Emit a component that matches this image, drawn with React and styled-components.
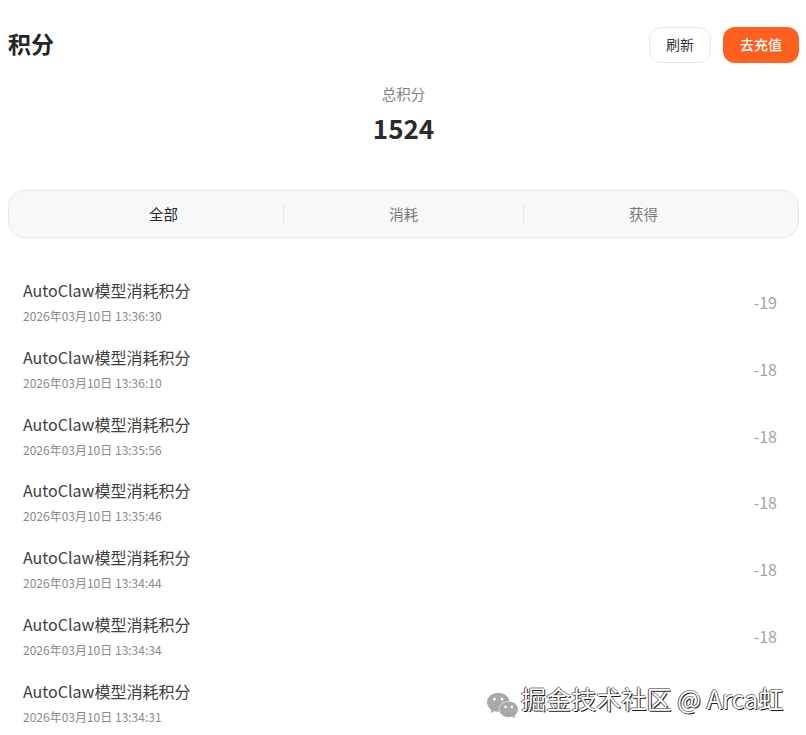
import styled, { createGlobalStyle } from "styled-components";
import { SiWechat } from "react-icons/si";

const records = [
  { time: "2026年03月10日 13:36:30", amount: -19 },
  { time: "2026年03月10日 13:36:10", amount: -18 },
  { time: "2026年03月10日 13:35:56", amount: -18 },
  { time: "2026年03月10日 13:35:46", amount: -18 },
  { time: "2026年03月10日 13:34:44", amount: -18 },
  { time: "2026年03月10日 13:34:34", amount: -18 },
  { time: "2026年03月10日 13:34:31", amount: -18 },
];

const tabs = ["全部", "消耗", "获得"];

export default function App() {
  return (
    <Page>
      <GlobalStyle />
      <Header>
        <Title>积分</Title>
        <Actions>
          <RefreshButton>刷新</RefreshButton>
          <RechargeButton>去充值</RechargeButton>
        </Actions>
      </Header>
      <Summary>
        <SummaryLabel>总积分</SummaryLabel>
        <SummaryValue>1524</SummaryValue>
      </Summary>
      <Tabs>
        {tabs.map((tab, i) => (
          <Tab key={tab} $active={i === 0}>
            {tab}
          </Tab>
        ))}
      </Tabs>
      <List>
        {records.map((record) => (
          <Row key={record.time}>
            <div>
              <RowTitle>AutoClaw模型消耗积分</RowTitle>
              <RowTime>{record.time}</RowTime>
            </div>
            <Amount>{record.amount}</Amount>
          </Row>
        ))}
      </List>
      <Watermark>
        <WechatMark size={31} color="#a9a9a9" />
        <WatermarkText>掘金技术社区 @ Arca虹</WatermarkText>
      </Watermark>
    </Page>
  );
}

const GlobalStyle = createGlobalStyle`
  html, body {
    margin: 0;
    height: 100%;
    overflow: hidden;
    background: #fff;
  }
  body {
    font-family: "Noto Sans CJK SC", "Noto Sans", sans-serif;
  }
`;

const Page = styled.div`
  position: relative;
  box-sizing: border-box;
  width: 806px;
  height: 735px;
  overflow: hidden;
  padding: 27px 7px 0 8px;
`;

const Header = styled.div`
  display: flex;
  align-items: center;
  justify-content: space-between;
  height: 36px;
`;

const Title = styled.h1`
  margin: 0;
  padding-bottom: 4px;
  font-size: 23px;
  font-weight: 700;
  line-height: 32px;
  color: #262626;
`;

const Actions = styled.div`
  display: flex;
  gap: 12px;
`;

const RefreshButton = styled.button`
  box-sizing: border-box;
  width: 62px;
  height: 36px;
  padding: 0 0 2px;
  border: 1px solid #e8e8e8;
  border-radius: 12px;
  background: #fff;
  font: 400 14px "Noto Sans CJK SC", sans-serif;
  color: #333;
`;

const RechargeButton = styled.button`
  box-sizing: border-box;
  width: 76px;
  height: 36px;
  padding: 0 0 2px;
  border: 0;
  border-radius: 12px;
  background: #ff5f1f;
  font: 500 14px "Noto Sans CJK SC", sans-serif;
  color: #fff;
`;

const Summary = styled.div`
  display: flex;
  flex-direction: column;
  align-items: center;
  padding-top: 21px;
`;

const SummaryLabel = styled.div`
  font-size: 14.5px;
  line-height: 20px;
  color: #808080;
`;

const SummaryValue = styled.div`
  margin-top: 5px;
  font-size: 26px;
  font-weight: 700;
  line-height: 38px;
  color: #2b2b2b;
`;

const Tabs = styled.div`
  box-sizing: border-box;
  display: grid;
  grid-template-columns: repeat(3, 1fr);
  align-items: center;
  width: 791.5px;
  height: 48px;
  margin: 43px 0 0 -0.5px;
  padding: 0 35px;
  border: 1px solid #e8e8e8;
  border-radius: 16px;
  background: #f8f8f8;
`;

const Tab = styled.div`
  height: 20px;
  font-size: 14.5px;
  line-height: 20px;
  text-align: center;
  color: ${(props) => (props.$active ? "#262626" : "#7a7a7a")};
  & + & {
    border-left: 1px solid #e8e8e8;
  }
`;

const List = styled.div`
  display: flex;
  flex-direction: column;
  margin-top: 30px;
`;

const Row = styled.div`
  box-sizing: border-box;
  display: flex;
  align-items: center;
  justify-content: space-between;
  flex: none;
  height: 66.85px;
  padding: 0 22px 0 15px;
`;

const RowTitle = styled.div`
  font-size: 16px;
  line-height: 24px;
  color: #404040;
`;

const RowTime = styled.div`
  margin-top: 5px;
  font-size: 12px;
  line-height: 18px;
  color: #8a8a8a;
`;

const Amount = styled.div`
  padding-top: 1px;
  font-size: 16px;
  line-height: 24px;
  color: #a3a3a3;
`;

const Watermark = styled.div`
  position: absolute;
  left: 487px;
  top: 684px;
  display: flex;
  align-items: center;
  gap: 3px;
  width: 305px;
  height: 36px;
  background: #fff;
`;

const WechatMark = styled(SiWechat)`
  flex: none;
  margin-top: 7px;
`;

const WatermarkText = styled.span`
  margin-top: -8px;
  font-size: 25px;
  line-height: 32px;
  letter-spacing: 0.1px;
  color: #fff;
  text-shadow: 1px 1px 0 #222, -1px 0 0 #555, 0 -1px 0 #888;
  white-space: nowrap;
`;
